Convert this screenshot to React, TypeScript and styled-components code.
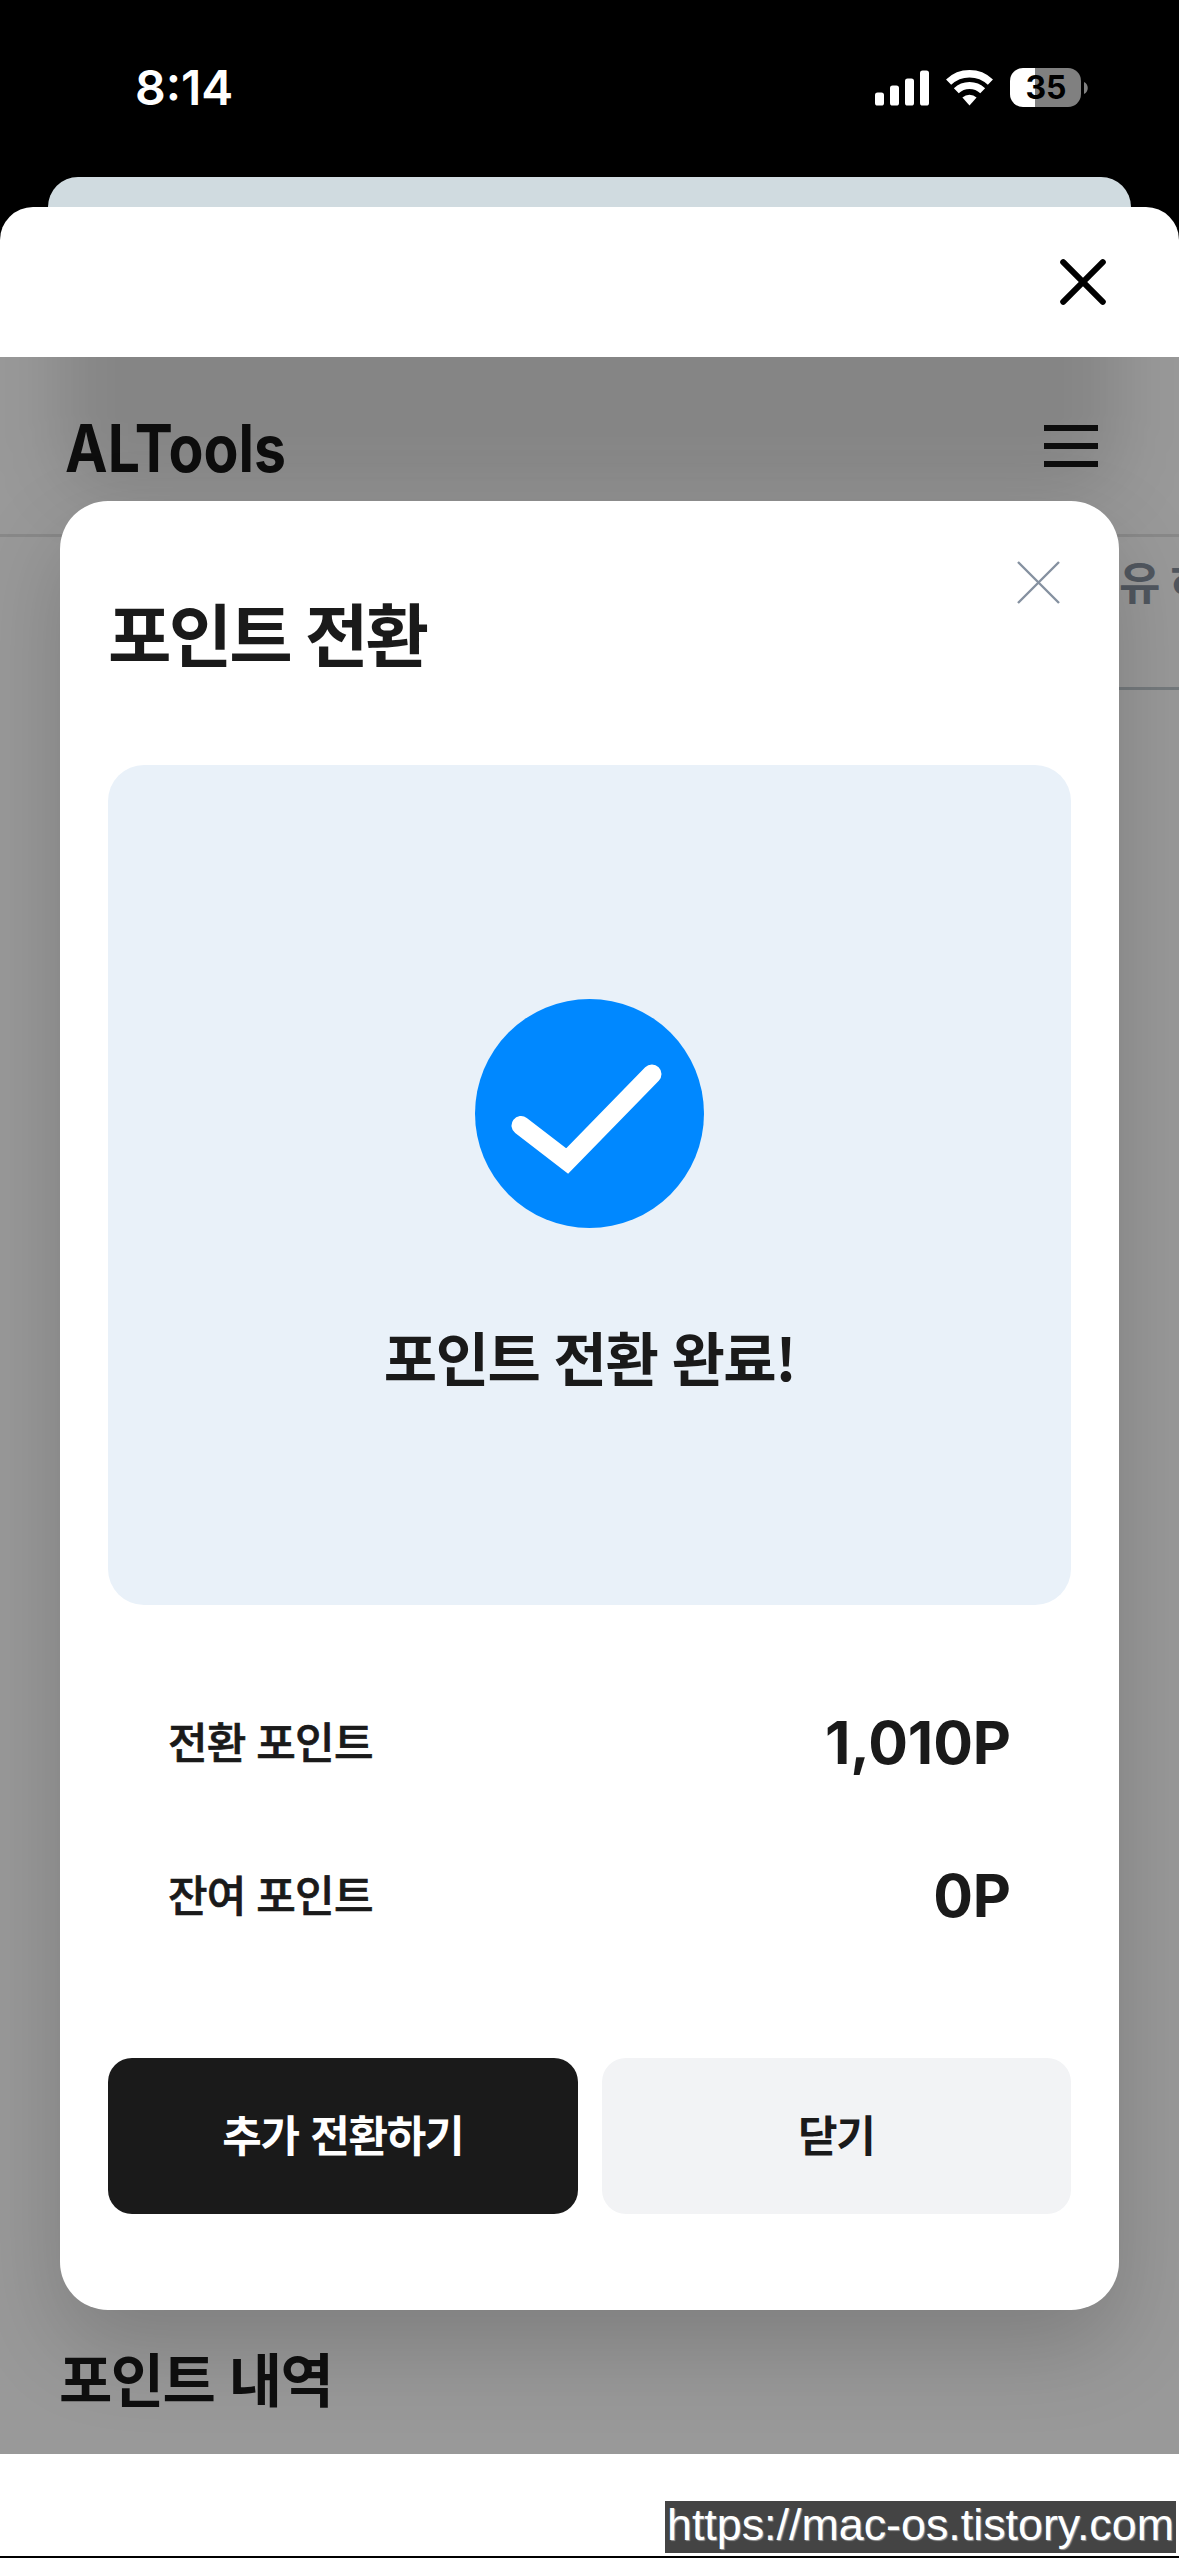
import React from "react";
import styled, { createGlobalStyle } from "styled-components";

const GlobalStyle = createGlobalStyle`
  *, *::before, *::after { box-sizing: border-box; }
  body { margin: 0; background: #000; }
`;

const hangul = `"Noto Sans CJK KR", sans-serif`;
const latin = `Inter, "Noto Sans CJK KR", sans-serif`;

const Screen = styled.div`
  display: flex;
  flex-direction: column;
  width: 1179px;
  height: 2558px;
  overflow: hidden;
  background: #000;
  font-family: ${hangul};
  color: #1a1a1a;
`;

const StatusBar = styled.header`
  display: flex;
  justify-content: space-between;
  align-items: center;
  height: 177px;
  padding: 0 91px 2px 135px;
  color: #fff;
`;

const Clock = styled.time`
  font: 600 48px/60px ${latin};
  letter-spacing: 0;
`;

const StatusIcons = styled.div`
  display: flex;
  align-items: center;
  gap: 17px;
`;

const Battery = styled.div`
  display: flex;
  align-items: center;
  gap: 3px;
`;

const BatteryBody = styled.div`
  display: grid;
  place-items: center;
  width: 71px;
  height: 39px;
  padding-left: 1px;
  border-radius: 13px;
  background: linear-gradient(90deg, #fff 25px, #808080 25px);
  color: #000;
  font: 700 32px/39px ${latin};
`;

const BackCard = styled.div`
  height: 30px;
  margin: 0 48px;
  border-radius: 30px 30px 0 0;
  background: #d0dbe0;
`;

const SheetBar = styled.div`
  display: flex;
  justify-content: flex-end;
  align-items: center;
  height: 150px;
  padding-right: 73px;
  border-radius: 33px 33px 0 0;
  background: #fff;
`;

const IconButton = styled.button`
  display: flex;
  padding: 0;
  border: 0;
  background: none;
`;

const Page = styled.main`
  position: relative;
  display: flex;
  flex-direction: column;
  height: 2097px;
  overflow: hidden;
  background: #fff;
`;

const PageHeader = styled.div`
  display: flex;
  justify-content: space-between;
  align-items: center;
  height: 180px;
  padding: 0 81px 0 64px;
  border-bottom: 3px solid #e5e5e5;
`;

const Tabs = styled.nav`
  display: flex;
  justify-content: flex-end;
  height: 153px;
  margin-left: 60px;
  padding-top: 11px;
  border-bottom: 3px solid #c4cbd1;
  overflow: hidden;
`;

const Tab = styled.span`
  flex: none;
  margin-right: -33px;
  color: #87919f;
  font-size: 45px;
  font-weight: 700;
  line-height: 66px;
  white-space: nowrap;
`;

const HistoryTitle = styled.h2`
  margin: auto 0 37px 59px;
  font-size: 58px;
  font-weight: 700;
  line-height: 80px;
  letter-spacing: -1.6px;
  word-spacing: 3px;
`;

const Overlay = styled.div`
  position: absolute;
  inset: 0;
  padding: 144px 60px;
  background: rgba(0, 0, 0, 0.4);

  &::before {
    content: "";
    position: absolute;
    left: 60px;
    right: 60px;
    top: -300px;
    height: 435px;
    border-radius: 48px;
    background: rgba(0, 0, 0, 0.13);
    filter: blur(34px);
  }
`;

const Modal = styled.section`
  position: relative;
  display: flex;
  flex-direction: column;
  height: 1809px;
  padding: 0 48px;
  border-radius: 48px;
  background: #fff;
  box-shadow: 0 36px 90px rgba(0, 0, 0, 0.18);
`;

const ModalHead = styled.div`
  display: flex;
  justify-content: space-between;
  align-items: flex-start;
  height: 264px;
  padding: 60px 11px 0 0;
`;

const ModalTitle = styled.h1`
  margin: 21px 0 0;
  font-size: 69px;
  font-weight: 700;
  line-height: 100px;
  letter-spacing: -2.8px;
  word-spacing: 2px;
`;

const ResultPanel = styled.div`
  display: flex;
  flex-direction: column;
  align-items: center;
  height: 840px;
  padding-top: 234px;
  border-radius: 36px;
  background: #e9f1f9;
`;

const ResultText = styled.p`
  margin: 88px 0 0;
  font-size: 58px;
  font-weight: 700;
  line-height: 80px;
  letter-spacing: -1.5px;
  word-spacing: 2.5px;
`;

const Summary = styled.dl`
  display: flex;
  flex-direction: column;
  gap: 63px;
  margin: 93px 0 0;
  padding: 0 60px;
`;

const SummaryRow = styled.div`
  display: flex;
  justify-content: space-between;
  align-items: center;
  height: 90px;
`;

const Label = styled.dt`
  padding-bottom: 6px;
  font-size: 43px;
  font-weight: 500;
  line-height: 60px;
  letter-spacing: -0.7px;
  word-spacing: 1.5px;
  -webkit-text-stroke: 0.7px #1a1a1a;
`;

const Amount = styled.dd`
  margin: 0;
  font: 700 59px/90px ${latin};
  letter-spacing: -0.1px;
`;

const Actions = styled.div`
  display: grid;
  grid-template-columns: 1fr 1fr;
  gap: 24px;
  margin-top: 117px;
`;

const Action = styled.button<{ $primary?: boolean }>`
  height: 156px;
  padding: 0 0 6px;
  border: 0;
  border-radius: 24px;
  background: ${(p) => (p.$primary ? "#1a1a1a" : "#f2f3f5")};
  color: ${(p) => (p.$primary ? "#fff" : "#1a1a1a")};
  font: 700 43px/60px ${hangul};
  letter-spacing: -1.3px;
  word-spacing: 3px;
`;

const Footer = styled.footer`
  display: flex;
  justify-content: flex-end;
  align-items: flex-end;
  height: 104px;
  padding: 0 3px 3px 0;
  border-bottom: 2px solid #000;
  background: #fff;
`;

const Watermark = styled.span`
  width: 511px;
  height: 52px;
  background: #444;
  color: #fff;
  font: 44.8px/46px "Liberation Sans", sans-serif;
  text-align: center;
  white-space: nowrap;
  text-shadow: 1px 1px 1px #999;
`;

const LogoText = styled.svg`
  display: block;
  font-family: Inter, sans-serif;
  font-size: 66px;
  font-weight: 700;
  fill: #1a1a1a;
`;

const SignalIcon = () => (
  <svg width="54" height="36" viewBox="0 0 54 36" fill="#fff">
    <rect x="0" y="22.5" width="9" height="13" rx="2.6" />
    <rect x="15" y="15.5" width="9" height="20" rx="2.6" />
    <rect x="30" y="8.5" width="9" height="27" rx="2.6" />
    <rect x="45" y="0.5" width="9" height="35" rx="2.6" />
  </svg>
);

const WifiIcon = () => (
  <svg width="47" height="36" viewBox="0 0 47 36">
    <g fill="none" stroke="#fff">
      <path d="M2.6 12.2a30.2 30.2 0 0 1 41.8 0" strokeWidth="7.4" />
      <path d="M10.3 20.8a19 19 0 0 1 26.4 0" strokeWidth="7" />
    </g>
    <path d="M16.4 27.6a10.4 10.4 0 0 1 14.2 0L23.5 35.4z" fill="#fff" />
  </svg>
);

const CheckIcon = () => (
  <svg width="229" height="229" viewBox="0 0 229 229">
    <circle cx="114.5" cy="114.5" r="114.5" fill="#08f" />
    <path d="M46 126.5 92.2 162 177 75" fill="none" stroke="#fff" strokeWidth="19" strokeLinecap="round" />
  </svg>
);

const Logo = () => (
  <LogoText width="226" height="100" viewBox="0 0 226 100">
    <text x="1" y="75.5" textLength="221" lengthAdjust="spacingAndGlyphs">
      ALTools
    </text>
  </LogoText>
);

const rows = [
  { label: "전환 포인트", value: "1,010P" },
  { label: "잔여 포인트", value: "0P" },
];

export default function App() {
  return (
    <Screen>
      <GlobalStyle />
      <StatusBar>
        <Clock>8:14</Clock>
        <StatusIcons>
          <SignalIcon />
          <WifiIcon />
          <Battery>
            <BatteryBody>35</BatteryBody>
            <svg width="4" height="12" viewBox="0 0 4 12">
              <path d="M0 0c5 2 5 10 0 12z" fill="#808080" />
            </svg>
          </Battery>
        </StatusIcons>
      </StatusBar>
      <BackCard />
      <SheetBar>
        <IconButton aria-label="닫기">
          <svg width="46" height="46" viewBox="0 0 46 46">
            <path d="M3.2 3.2l39.6 39.6M42.8 3.2L3.2 42.8" stroke="#000" strokeWidth="6" strokeLinecap="round" />
          </svg>
        </IconButton>
      </SheetBar>
      <Page>
        <PageHeader>
          <Logo />
          <IconButton aria-label="메뉴">
            <svg width="54" height="42" viewBox="0 0 54 42">
              <path d="M0 3h54M0 21h54M0 39h54" stroke="#1a1a1a" strokeWidth="6" />
            </svg>
          </IconButton>
        </PageHeader>
        <Tabs>
          <Tab>유 하</Tab>
        </Tabs>
        <HistoryTitle>포인트 내역</HistoryTitle>
        <Overlay>
          <Modal>
            <ModalHead>
              <ModalTitle>포인트 전환</ModalTitle>
              <IconButton aria-label="닫기">
                <svg width="43" height="43" viewBox="0 0 43 43">
                  <path d="M1 1l41 41M42 1L1 42" stroke="#8591a0" strokeWidth="2.4" />
                </svg>
              </IconButton>
            </ModalHead>
            <ResultPanel>
              <CheckIcon />
              <ResultText>포인트 전환 완료!</ResultText>
            </ResultPanel>
            <Summary>
              {rows.map((r) => (
                <SummaryRow key={r.label}>
                  <Label>{r.label}</Label>
                  <Amount>{r.value}</Amount>
                </SummaryRow>
              ))}
            </Summary>
            <Actions>
              <Action $primary>추가 전환하기</Action>
              <Action>닫기</Action>
            </Actions>
          </Modal>
        </Overlay>
      </Page>
      <Footer>
        <Watermark>https://mac-os.tistory.com</Watermark>
      </Footer>
    </Screen>
  );
}
